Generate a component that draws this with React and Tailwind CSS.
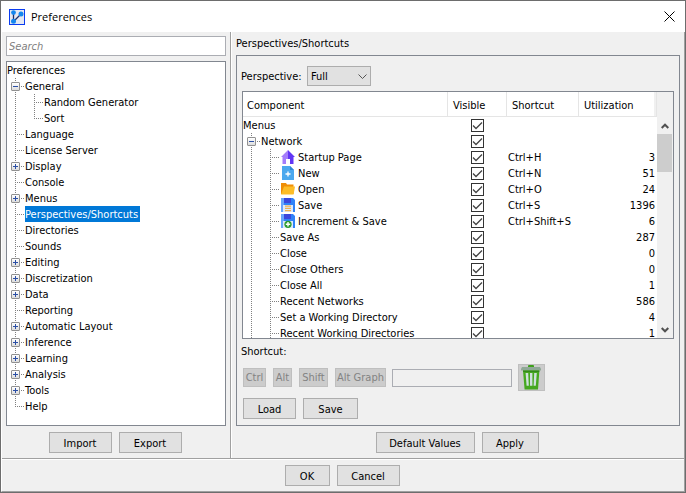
import React, { useState } from 'react';

const treeItems = [
    { label: 'Preferences', level: 0 },
    { label: 'General', level: 1, toggle: 'open' },
    { label: 'Random Generator', level: 2 },
    { label: 'Sort', level: 2, last: true },
    { label: 'Language', level: 1 },
    { label: 'License Server', level: 1 },
    { label: 'Display', level: 1, toggle: 'closed' },
    { label: 'Console', level: 1 },
    { label: 'Menus', level: 1, toggle: 'closed' },
    { label: 'Perspectives/Shortcuts', level: 1 },
    { label: 'Directories', level: 1 },
    { label: 'Sounds', level: 1 },
    { label: 'Editing', level: 1, toggle: 'closed' },
    { label: 'Discretization', level: 1, toggle: 'closed' },
    { label: 'Data', level: 1, toggle: 'closed' },
    { label: 'Reporting', level: 1 },
    { label: 'Automatic Layout', level: 1, toggle: 'closed' },
    { label: 'Inference', level: 1, toggle: 'closed' },
    { label: 'Learning', level: 1, toggle: 'closed' },
    { label: 'Analysis', level: 1, toggle: 'closed' },
    { label: 'Tools', level: 1, toggle: 'closed' },
    { label: 'Help', level: 1, last: true },
];

const menuRows = [
    { label: 'Menus', level: 0 },
    { label: 'Network', level: 1, toggle: 'open' },
    { label: 'Startup Page', level: 2, icon: 'home', shortcut: 'Ctrl+H', count: 3 },
    { label: 'New', level: 2, icon: 'new', shortcut: 'Ctrl+N', count: 51 },
    { label: 'Open', level: 2, icon: 'open', shortcut: 'Ctrl+O', count: 24 },
    { label: 'Save', level: 2, icon: 'save', shortcut: 'Ctrl+S', count: 1396 },
    { label: 'Increment & Save', level: 2, icon: 'increment', shortcut: 'Ctrl+Shift+S', count: 6 },
    { label: 'Save As', level: 2, count: 287 },
    { label: 'Close', level: 2, count: 0 },
    { label: 'Close Others', level: 2, count: 0 },
    { label: 'Close All', level: 2, count: 1 },
    { label: 'Recent Networks', level: 2, count: 586 },
    { label: 'Set a Working Directory', level: 2, count: 4 },
    { label: 'Recent Working Directories', level: 2, count: 1 },
];

const AppLogo = () => (
    <svg className="w-4 h-4" viewBox="0 0 16 16">
        <rect width="16" height="16" fill="#0a3cf0" />
        <rect x="1" y="1" width="14" height="14" fill="#e4e8f2" />
        <path d="M4.5 3.5v9M4.5 12.5L12 5" stroke="#1c2f6b" strokeWidth="1.3" fill="none" />
        <circle cx="4.5" cy="3.6" r="2.4" fill="#1487ee" />
        <circle cx="4.5" cy="12.2" r="2.5" fill="#1487ee" />
        <circle cx="12" cy="5" r="2.5" fill="#1487ee" />
    </svg>
);

const TrashIcon = () => (
    <svg className="w-[25px] h-[25px]" viewBox="0 0 25 25">
        <rect x="9" y="0" width="6" height="3" rx="1" fill="#3fa01c" />
        <path d="M3 2h18l1 2v1.5H2V4z" fill="#8fa896" />
        <path d="M4 5.5h16.4L19 24.5H5.6z" fill="#46a81f" />
        <path d="M4 5.5h16.4l-.2 1.5H4.2z" fill="#33891a" />
        <path d="M6.6 8h2.6l.6 12.7H7.6zM11 8h2.4v12.7H11zM15.2 8h2.6l-1 12.7h-2.2z" fill="#cfe0dc" />
    </svg>
);

const RowIcon = ({ name }) => (
    <svg className="w-[14px] h-[14px] shrink-0" viewBox="0 0 14 14">
        {name === 'home' && (
            <>
                <path d="M7 0L0 7h1.5v7H5V9h2z" fill="#a47dfb" />
                <path d="M7 0l7 7h-1.5v7H9V9H7z" fill="#6236f5" />
            </>
        )}
        {name === 'new' && (
            <>
                <path d="M1 0h8l4 4v10H1z" fill="#4ba8ee" />
                <path d="M9 0l4 4H9z" fill="#2f86d4" />
                <path d="M7 5.5v5M4.5 8h5" stroke="#fff" strokeWidth="1.3" />
            </>
        )}
        {name === 'open' && (
            <>
                <path d="M0 1h5l1 1.5h6.5V12H0z" fill="#ef8e06" />
                <path d="M3 4.5h11L12.5 12.5H0z" fill="#fdbd27" />
            </>
        )}
        {(name === 'save' || name === 'increment') && (
            <>
                <path d="M0 0h12l2 2v12H0z" fill="#2f82f8" />
                <path d="M0 0h3v14H0z" fill="#69a5fb" />
                <rect x="3" y="0" width="7" height="5" fill="#3a47dc" />
                <rect x="2" y="7" width="10" height="7" fill="#dde9fa" />
            </>
        )}
        {name === 'save' && <path d="M4 8.2h6M4 10.4h6M4 12.6h6" stroke="#eeb04e" strokeWidth="1.3" />}
        {name === 'increment' && (
            <>
                <circle cx="7" cy="10.3" r="3.6" fill="#2c9b2f" />
                <path d="M7 8.1v4.4M4.8 10.3h4.4" stroke="#fff" strokeWidth="1.4" />
            </>
        )}
    </svg>
);

// One indent column of a tree row: dotted guide lines plus an optional expander
const Guide = ({ branch, last, toggle, label }) => (
    <span className={branch ? 'relative w-[18px] h-4 shrink-0' : 'relative w-[19px] h-4 shrink-0'}>
        <svg className="block w-full h-4" viewBox={branch ? '0 0 18 16' : '0 0 19 16'} fill="none" stroke="#808080" strokeDasharray="1 1">
            <path d={last ? 'M8.5 0V9' : 'M8.5 0V16'} />
            {branch && <path d="M8 8.5H17" />}
        </svg>
        {toggle && (
            <button
                type="button"
                aria-label={`${toggle === 'open' ? 'Collapse' : 'Expand'} ${label}`}
                className="absolute left-1 top-1 w-[9px] h-[9px] border border-[#919191] rounded-[1px] bg-gradient-to-b from-white to-[#dcdcdc]"
            >
                <svg className="block w-[7px] h-[7px]" viewBox="0 0 7 7" stroke="#2b4fa5">
                    <path d="M1 3.5h5" />
                    {toggle === 'closed' && <path d="M3.5 1v5" />}
                </svg>
            </button>
        )}
    </span>
);

const Guides = ({ item }) => (
    <>
        {item.level === 2 && <Guide />}
        {item.level > 0 && <Guide branch last={item.last} toggle={item.toggle} label={item.label} />}
    </>
);

const Button = ({ className, children }) => (
    <button type="button" className={`h-[21px] pt-px border border-[#adadad] bg-[#e1e1e1] hover:bg-[#e5f1fb] text-center whitespace-nowrap ${className}`}>
        {children}
    </button>
);

const KeyToggle = ({ className, children }) => (
    <button type="button" disabled className={`h-[19px] border border-[#bfbfbf] bg-[#cccccc] text-[#838383] whitespace-nowrap ${className}`}>
        {children}
    </button>
);

const CheckBox = ({ label, checked, onChange }) => (
    <label className="grid w-[13px] h-[13px] mx-auto">
        <input
            type="checkbox"
            aria-label={label}
            checked={checked}
            onChange={onChange}
            className="peer appearance-none col-start-1 row-start-1 w-[13px] h-[13px] border border-[#333333] bg-white"
        />
        <svg className="hidden peer-checked:block pointer-events-none col-start-1 row-start-1 w-[13px] h-[13px]" viewBox="0 0 13 13" fill="none" stroke="#444" strokeWidth="1.3">
            <path d="M2 6.5l3 3 6-6" />
        </svg>
    </label>
);

const App = () => {
    const [selected, setSelected] = useState('Perspectives/Shortcuts');
    const [hidden, setHidden] = useState({});

    return (
        <div className="h-screen flex flex-col border border-[#6d6d6d] bg-[#f0f0f0] font-['DejaVu_Sans_Condensed','DejaVu_Sans',sans-serif] text-[11px] leading-[15px] text-black">
            <header className="h-[31px] shrink-0 flex items-center gap-[6px] pl-2 pr-[10px] bg-white">
                <AppLogo />
                <h1 className="flex-1 font-['Open_Sans','Noto_Sans',sans-serif]">Preferences</h1>
                <button type="button" aria-label="Close">
                    <svg className="w-[11px] h-[11px]" viewBox="0 0 11 11" stroke="#000" fill="none">
                        <path d="M.5.5l10 10M10.5.5l-10 10" />
                    </svg>
                </button>
            </header>

            <div className="flex-1 min-h-0 flex flex-col border-l border-l-white border-r border-r-[#a0a0a0] border-b border-b-[#a0a0a0]">
                <div className="flex-1 min-h-0 flex">
                    <aside className="w-[228px] shrink-0 flex flex-col px-1 pt-1 pb-[5px]">
                        <input
                            type="search"
                            aria-label="Search"
                            placeholder="Search"
                            className="h-5 shrink-0 px-[2px] border border-[#abadb3] bg-white italic placeholder:text-[#808080] outline-none"
                        />
                        <ul className="flex-1 min-h-0 overflow-hidden mt-[5px] border border-[#828790] bg-white">
                            {treeItems.map((item) => (
                                <li key={item.label} className="flex h-4">
                                    <Guides item={item} />
                                    <button
                                        type="button"
                                        onClick={() => setSelected(item.label)}
                                        className={`pt-px pr-[2px] whitespace-nowrap ${item.label === selected ? 'bg-[#0078d7] text-white' : ''}`}
                                    >
                                        {item.label}
                                    </button>
                                </li>
                            ))}
                        </ul>
                        <div className="flex justify-center gap-[7px] mt-[6px] pr-[2px]">
                            <Button className="w-[63px]">Import</Button>
                            <Button className="w-[63px]">Export</Button>
                        </div>
                    </aside>

                    <div className="w-[2px] shrink-0 border-l border-[#a0a0a0] bg-white" />

                    <main className="flex-1 min-w-0 flex flex-col px-1 pb-[5px]">
                        <h2 className="h-[23px] shrink-0 flex items-center">Perspectives/Shortcuts</h2>

                        <section className="flex-1 min-h-0 flex flex-col px-1 pt-[10px] pb-[6px] border border-[#828790]">
                            <div className="flex items-center">
                                <label htmlFor="perspective" className="w-[66px] pt-px">Perspective:</label>
                                <div className="relative">
                                    <select id="perspective" className="appearance-none block w-16 h-5 pl-[3px] border border-[#adadad] bg-[#e1e1e1]">
                                        <option>Full</option>
                                    </select>
                                    <svg className="absolute right-1 top-2 w-[9px] h-[5px] pointer-events-none" viewBox="0 0 9 5" fill="none" stroke="#555">
                                        <path d="M.5.5l4 4 4-4" />
                                    </svg>
                                </div>
                            </div>

                            <div className="flex-1 min-h-0 overflow-hidden flex mt-[5px] mx-px border border-[#828790] bg-white">
                                <div className="flex-1 min-w-0">
                                    <table className="w-full table-fixed border-separate border-spacing-0">
                                        <thead>
                                            <tr className="h-[25px] text-left [&>th]:p-0 [&>th]:pt-[2px] [&>th]:font-normal [&>th]:border-b [&>th]:border-r [&>th]:border-[#e5e5e5]">
                                                <th><span className="pl-1">Component</span></th>
                                                <th className="w-[59px]"><span className="pl-[5px]">Visible</span></th>
                                                <th className="w-[72px]"><span className="pl-[5px]">Shortcut</span></th>
                                                <th className="w-[78px] bg-[linear-gradient(to_left,#f0f0f0_2px,#fff_2px)]"><span className="pl-[5px]">Utilization</span></th>
                                            </tr>
                                        </thead>
                                        <tbody>
                                            {menuRows.map((row) => (
                                                <tr key={row.label} className="h-4 [&>td]:p-0">
                                                    <td>
                                                        <div className="flex items-center h-4 whitespace-nowrap">
                                                            <Guides item={row} />
                                                            {row.icon && (
                                                                <span className="pl-px pr-[3px]"><RowIcon name={row.icon} /></span>
                                                            )}
                                                            <span className="pt-px">{row.label}</span>
                                                        </div>
                                                    </td>
                                                    <td>
                                                        <CheckBox
                                                            label={`${row.label} visible`}
                                                            checked={!hidden[row.label]}
                                                            onChange={() => setHidden(prev => ({ ...prev, [row.label]: !prev[row.label] }))}
                                                        />
                                                    </td>
                                                    <td><div className="pt-px pl-px">{row.shortcut}</div></td>
                                                    <td><div className="pt-px pr-[2px] text-right">{row.count}</div></td>
                                                </tr>
                                            ))}
                                        </tbody>
                                    </table>
                                </div>

                                <div className="w-4 shrink-0 flex flex-col bg-[#f0f0f0]">
                                    <div className="h-[25px]" />
                                    <button type="button" aria-label="Scroll up" className="h-[17px] flex items-center justify-center">
                                        <svg className="w-2 h-[6px]" viewBox="0 0 8 6" fill="none" stroke="#505050" strokeWidth="2">
                                            <path d="M.7 5L4 1.7 7.3 5" />
                                        </svg>
                                    </button>
                                    <div className="h-[38px] mr-px bg-[#cdcdcd]" />
                                    <div className="flex-1" />
                                    <button type="button" aria-label="Scroll down" className="h-[17px] flex items-center justify-center">
                                        <svg className="w-2 h-[6px]" viewBox="0 0 8 6" fill="none" stroke="#505050" strokeWidth="2">
                                            <path d="M.7 1L4 4.3 7.3 1" />
                                        </svg>
                                    </button>
                                </div>
                            </div>

                            <label htmlFor="shortcut" className="mt-1 pt-px">Shortcut:</label>
                            <div className="flex items-center mt-[5px] ml-[2px]">
                                <div className="flex gap-[7px]">
                                    <KeyToggle className="w-[23px]">Ctrl</KeyToggle>
                                    <KeyToggle className="w-[19px]">Alt</KeyToggle>
                                    <KeyToggle className="w-[29px]">Shift</KeyToggle>
                                    <KeyToggle className="w-[51px]">Alt Graph</KeyToggle>
                                </div>
                                <input id="shortcut" type="text" disabled className="w-[120px] h-[18px] mx-[6px] px-1 border border-[#abadb3]" />
                                <button type="button" aria-label="Delete shortcut" className="w-[27px] h-[27px] border border-[#bfbfbf] bg-[#cccccc]">
                                    <TrashIcon />
                                </button>
                            </div>
                            <div className="flex gap-[7px] mt-[7px] ml-[2px]">
                                <Button className="w-[53px]">Load</Button>
                                <Button className="w-[55px]">Save</Button>
                            </div>
                        </section>

                        <div className="flex justify-center gap-[7px] mt-[6px] pr-[2px]">
                            <Button className="w-[99px]">Default Values</Button>
                            <Button className="w-[57px]">Apply</Button>
                        </div>
                    </main>
                </div>

                <footer className="border-t border-[#a0a0a0]">
                    <div className="flex justify-center gap-[7px] py-[5px] pr-[2px] border-t border-white">
                        <Button className="w-[45px]">OK</Button>
                        <Button className="w-[63px]">Cancel</Button>
                    </div>
                </footer>
            </div>
        </div>
    );
};

export default App;
